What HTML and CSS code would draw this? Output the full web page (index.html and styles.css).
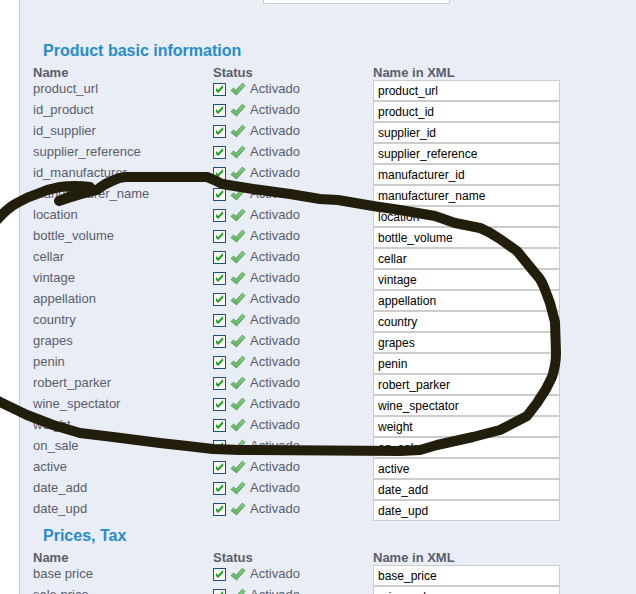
FILE: index.html
```
<!DOCTYPE html>
<html lang="es">
<head>
<meta charset="utf-8">
<title>Product feed fields</title>
<link rel="stylesheet" href="styles.css">
</head>
<body>
<svg class="symbols" aria-hidden="true">
  <defs>
    <linearGradient id="tick-fill" x1="0" y1="0" x2="0" y2="1">
      <stop offset="0" stop-color="#86cf80"/>
      <stop offset="1" stop-color="#5cb45c"/>
    </linearGradient>
    <symbol id="tick" viewBox="0 0 16 14">
      <path d="M1 8.500 3.500 6 6 8.300 12.300 1.200 15 3.500 6.500 13Z" fill="url(#tick-fill)" stroke="#62a066" stroke-linejoin="round"/>
    </symbol>
  </defs>
</svg>
<main class="panel">
  <div class="top-field"><input class="text" type="text" aria-label="Feed value"></div>
  <h2>Product basic information</h2>
  <table class="fields" id="basic"></table>
  <h2>Prices, Tax</h2>
  <table class="fields" id="prices"></table>
</main>
<svg class="marker" viewBox="0 0 636 594" aria-hidden="true">
  <path d="M-4 221 C4 212 9 207 17 203 Q27 197 37 194 Q48 189 60 187 Q75 185 90 187 L92 190 74 195 59 201 Q80 194 97 190 Q104 184 112 181 Q120 177 127 177 L207 177 Q215 180 222 184 L253 189 290 194 320 199 338 200 373 206 400 210 435 216 455 223 480 228 Q490 232 500 239 L517 251 535 273 Q541 279 544 287 L550 303 555 322 556 353 Q556 365 552 377 L546 389 537 403 527 416 500 430 473 437 437 445 420 450 400 451 240 450 213 449 187 446 160 443 113 437 80 433 53 425 27 415 0 402 -5 399"/>
</svg>
<script src="fields.js"></script>
</body>
</html>
```
FILE: styles.css
```
body {
  margin: 0;
  background: #fff;
  color: #5a5d6e;
  font: 13px/18px "Liberation Sans", Arial, sans-serif;
}

.symbols {
  position: absolute;
  width: 0;
  height: 0;
}

.panel {
  margin: -17px 0 0 19px;
  padding: 0 13px;
  border-left: 1px solid #c8ccd4;
  background: #e9edf5;
}

.top-field {
  padding: 0 0 32px 230px;
}

h2 {
  margin: 0;
  padding: 2px 0 0 10px;
  color: #268ccd;
  font-size: 16px;
  line-height: 26px;
}

.fields {
  width: 100%;
  border-collapse: collapse;
  table-layout: fixed;
}

.fields th,
.fields td {
  padding: 0;
  text-align: left;
  vertical-align: top;
}

.fields th {
  padding-top: 2px;
  line-height: 14px;
}

.fields td {
  height: 21px;
}

.name {
  width: 180px;
}

.status {
  width: 160px;
}

.state {
  display: flex;
  align-items: center;
  gap: 4px;
}

.state input {
  appearance: none;
  width: 13px;
  height: 13px;
  margin: 0;
  border: 1px solid #1c5180;
  background: #f6f6f2;
}

.state input:checked {
  background: #f6f6f2 url("data:image/svg+xml,%3Csvg xmlns='http://www.w3.org/2000/svg' viewBox='0 0 11 11'%3E%3Cpath d='M2 4v3l2 2 5-5V1L4 6z' fill='%2321a121'/%3E%3C/svg%3E");
}

.state svg {
  width: 16px;
  height: 14px;
}

.text {
  display: block;
  box-sizing: border-box;
  width: 187px;
  height: 21px;
  margin: 0;
  padding: 1px 4px 0;
  border: 1px solid #ccc;
  border-radius: 0;
  background: #fff;
  color: #000;
  font: 12px "Liberation Sans", Arial, sans-serif;
}

.marker {
  position: absolute;
  top: 0;
  left: 0;
  width: 636px;
  height: 594px;
  fill: none;
  stroke: #231d0c;
  stroke-width: 10px;
  stroke-linecap: round;
  stroke-linejoin: round;
  pointer-events: none;
}
```
FILE: fields.js
```
const basic = [
  ["product_url", "product_url"],
  ["id_product", "product_id"],
  ["id_supplier", "supplier_id"],
  ["supplier_reference", "supplier_reference"],
  ["id_manufacturer", "manufacturer_id"],
  ["manufacturer_name", "manufacturer_name"],
  ["location", "location"],
  ["bottle_volume", "bottle_volume"],
  ["cellar", "cellar"],
  ["vintage", "vintage"],
  ["appellation", "appellation"],
  ["country", "country"],
  ["grapes", "grapes"],
  ["penin", "penin"],
  ["robert_parker", "robert_parker"],
  ["wine_spectator", "wine_spectator"],
  ["weight", "weight"],
  ["on_sale", "on_sale"],
  ["active", "active"],
  ["date_add", "date_add"],
  ["date_upd", "date_upd"]
];
const prices = [
  ["base price", "base_price"],
  ["sale price", "price_sale"]
];

function fill(id, rows) {
  const body = rows.map(([name, xml], i) => `
    <tr>
      <td><label for="${id}-xml-${i}">${name}</label></td>
      <td><label class="state"><input type="checkbox" checked><svg aria-hidden="true"><use href="#tick"/></svg><span>Activado</span></label></td>
      <td><input class="text" type="text" id="${id}-xml-${i}" value="${xml}"></td>
    </tr>`).join("");
  document.getElementById(id).innerHTML =
    `<thead><tr><th class="name">Name</th><th class="status">Status</th><th>Name in XML</th></tr></thead><tbody>${body}</tbody>`;
}

fill("basic", basic);
fill("prices", prices);
```
